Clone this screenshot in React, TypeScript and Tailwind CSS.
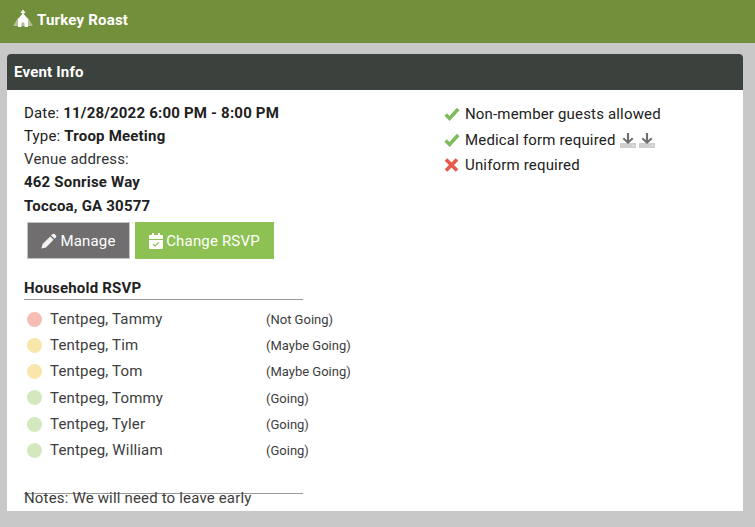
import React from "react";

const Dl = () => (
  <svg width="16" height="15" viewBox="0 0 16 15" className="ml-[3px] inline-block">
    <path d="M0 10h16v5H0z" fill="#cfcfcf" />
    <path d="M6.9 0h2.2v7.2L12 4.4l1.4 1.5L8 11 2.6 5.9 4 4.4l2.9 2.8z" fill="#6e6e6e" />
    <path d="M12.5 12h1.5v1h-1.5z" fill="#f5f5f5" />
  </svg>
);

const Church = () => (
  <svg width="20" height="17" viewBox="0 0 20 17" className="shrink-0">
    <path d="M0 16 L5 8 H15 L20 16z" fill="#ffffff" fillOpacity="0.45" />
    <path d="M9.2 0h1.6v1.4h1.4v1.5h-1.4V4L15 9v8h-3.4v-3.2a1.6 1.6 0 0 0-3.2 0V17H5V9l4.2-5V2.9H7.8V1.4h1.4z" fill="#fff" />
  </svg>
);

const Pencil = () => (
  <svg width="16" height="16" viewBox="0 0 16 16" className="shrink-0">
    <path d="M11.4 1.2c.7-.7 1.7-.7 2.4 0l1 1c.7.7.7 1.7 0 2.4l-1.2 1.2L10 2.6zM9.2 3.4l3.4 3.4-7.6 7.6-4.6 1.2L1.6 11z" fill="#f2f2f2" />
  </svg>
);

const Calendar = () => (
  <svg width="14" height="16" viewBox="0 0 14 16" className="shrink-0">
    <path d="M3 0h2v2h4V0h2v2h2a1 1 0 0 1 1 1v3H0V3a1 1 0 0 1 1-1h2z" fill="#fff" />
    <path d="M0 7h14v8a1 1 0 0 1-1 1H1a1 1 0 0 1-1-1z" fill="#fff" />
    <path d="M4 11l2 2 4-3.6" fill="none" stroke="#8dc153" strokeWidth="1.2" />
  </svg>
);

const Check = () => (
  <svg width="16" height="14" viewBox="0 0 16 14">
    <path d="M1.6 7.4l4 4L14.2 2" fill="none" stroke="#7dbb5b" strokeWidth="3.5" />
  </svg>
);

const Cross = () => (
  <svg width="15" height="14" viewBox="0 0 15 14">
    <path d="M2 1.5l11 11M13 1.5l-11 11" fill="none" stroke="#e8584d" strokeWidth="3.6" />
  </svg>
);

const rows = [
  ["Tentpeg, Tammy", "(Not Going)", "bg-[#f6bdb5]"],
  ["Tentpeg, Tim", "(Maybe Going)", "bg-[#f8e6ab]"],
  ["Tentpeg, Tom", "(Maybe Going)", "bg-[#f8e6ab]"],
  ["Tentpeg, Tommy", "(Going)", "bg-[#d3e8bd]"],
  ["Tentpeg, Tyler", "(Going)", "bg-[#d3e8bd]"],
  ["Tentpeg, William", "(Going)", "bg-[#d3e8bd]"],
];

export default function App() {
  return (
    <div className="h-[527px] overflow-hidden bg-[#c8c8c8] font-['Roboto',sans-serif] text-[15px] tracking-[0.17px] text-[#212121]">
      <header className="flex h-[43px] items-start bg-[#728f3b] pl-[13px] pt-[10px] text-white">
        <Church />
        <span className="ml-[4px] text-[15px] font-bold leading-[20px] tracking-[0.2px]">Turkey Roast</span>
      </header>
      <main className="ml-[7px] mr-[12px] mt-[11px] h-[457px] overflow-hidden rounded-t-[4px] bg-white">
        <h2 className="flex h-[36px] items-center bg-[#3b413d] pl-[7px] pt-[1px] text-[15px] font-bold tracking-[0.2px] text-white">Event Info</h2>
        <div className="flex pl-[17px] pt-[12px]">
          <section className="w-[417px]">
            <div className="h-[115px] leading-[23.15px]">
              <p>Date: <b className="font-bold tracking-[0.2px]">11/28/2022 6:00 PM - 8:00 PM</b></p>
              <p>Type: <b className="font-bold tracking-[0.2px]">Troop Meeting</b></p>
              <p className="text-[#333]">Venue address:</p>
              <p className="font-bold tracking-[0.2px]">462 Sonrise Way</p>
              <p className="font-bold tracking-[0.2px]">Toccoa, GA 30577</p>
            </div>
            <div className="ml-[3px] mt-[5px] flex gap-[5px] text-white">
              <button className="flex h-[37px] w-[103px] items-center justify-center gap-[3px] border border-[#c4c4c4] bg-[#706e6f]">
                <Pencil /><span className="pt-[1px]">Manage</span>
              </button>
              <button className="flex h-[37px] w-[139px] items-center justify-center gap-[3px] bg-[#8dc153]">
                <Calendar /><span className="pt-[1px]">Change RSVP</span>
              </button>
            </div>
            <h3 className="mt-[19px] w-[279px] border-b border-[#999] pb-[1px] text-[15px] font-bold leading-[20px] tracking-[0.2px]">Household RSVP</h3>
            <ul className="mt-[6.2px] text-[#3d3d3d]">
              {rows.map(([name, status, dot]) => (
                <li key={name} className="flex h-[26.2px] items-center pl-[3px]">
                  <span className={`h-[15px] w-[15px] rounded-full ${dot}`} />
                  <span className="ml-[8px] w-[216px]">{name}</span>
                  <span className="pt-[1px] text-[13px] tracking-normal">{status}</span>
                </li>
              ))}
            </ul>
            <div className="mt-[30px] w-[279px] border-t border-[#999]" />
            <p className="-mt-[6px] leading-[20px] text-[#3d3d3d]">Notes: We will need to leave early</p>
          </section>
          <section className="-mt-[0.6px] pl-[3px] text-[#212121]">
            {[
              [<Check key="c" />, "Non-member guests allowed", false],
              [<Check key="c" />, "Medical form required", true],
              [<Cross key="x" />, "Uniform required", false],
            ].map(([icon, label, dl], i) => (
              <div key={i} className="flex h-[25.5px] items-center whitespace-nowrap [&:nth-child(2)]:pt-[1px]">
                <span className="flex w-[21px]">{icon}</span>
                <span>{label}</span>
                {dl ? (<><span className="w-[1px]" /><Dl /><Dl /></>) : null}
              </div>
            ))}
          </section>
        </div>
      </main>
    </div>
  );
}
